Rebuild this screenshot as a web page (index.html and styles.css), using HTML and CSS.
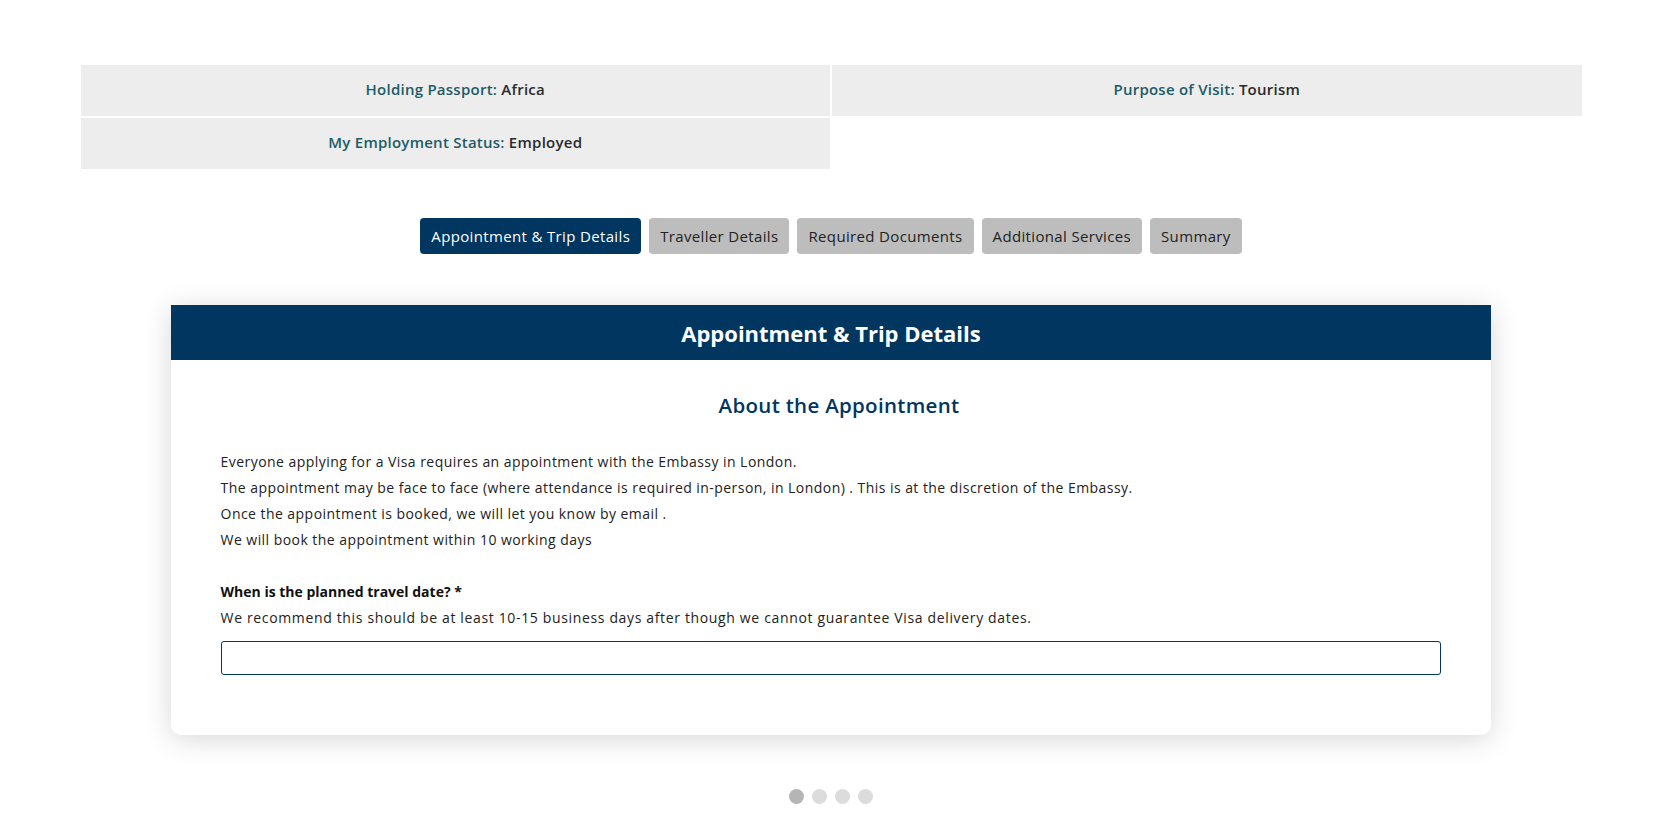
FILE: index.html
```html
<!DOCTYPE html>
<html lang="en">
<head>
<meta charset="utf-8">
<title>Appointment &amp; Trip Details</title>
<link rel="stylesheet" href="styles.css">
</head>
<body>
<div class="page">
  <div class="container">
    <div class="summary">
      <div class="cell"><span class="key">Holding Passport:</span>&nbsp;Africa</div>
      <div class="cell"><span class="key">Purpose of Visit:</span>&nbsp;Tourism</div>
      <div class="cell"><span class="key">My Employment Status:</span>&nbsp;Employed</div>
    </div>

    <nav class="steps">
      <button class="step active">Appointment &amp; Trip Details</button>
      <button class="step">Traveller Details</button>
      <button class="step">Required Documents</button>
      <button class="step">Additional Services</button>
      <button class="step">Summary</button>
    </nav>

    <section class="card">
      <header class="card-head">Appointment &amp; Trip Details</header>
      <div class="card-body">
        <h2 class="section-title">About the Appointment</h2>
        <p class="info">
          Everyone applying for a Visa requires an appointment with the Embassy in London.<br>
          The appointment may be face to face (where attendance is required in-person, in London) . This is at the discretion of the Embassy.<br>
          Once the appointment is booked, we will let you know by email .<br>
          We will book the appointment within 10 working days
        </p>
        <label class="field-label" for="travel-date">When is the planned travel date? *</label>
        <p class="help">We recommend this should be at least 10-15 business days after though we cannot guarantee Visa delivery dates.</p>
        <input class="field" id="travel-date" type="text">
      </div>
    </section>

    <div class="dots">
      <span class="dot on"></span>
      <span class="dot"></span>
      <span class="dot"></span>
      <span class="dot"></span>
    </div>
  </div>
</div>
</body>
</html>
```

FILE: styles.css
```css
* { box-sizing: border-box; }

html, body {
  margin: 0;
  padding: 0;
  background: #ffffff;
}

body {
  font-family: "Open Sans", "Liberation Sans", sans-serif;
  color: #222;
}

.page {
  width: 1662px;
  padding-top: 65px;
}

.container {
  width: 1501px;
  margin: 0 auto;
}

.summary {
  display: grid;
  grid-template-columns: 1fr 1fr;
  gap: 2px;
}

.cell {
  background: #ededed;
  height: 51px;
  display: flex;
  align-items: center;
  justify-content: center;
  padding-bottom: 4px;
  font-size: 15px;
  letter-spacing: 0.25px;
  font-weight: 600;
  color: #2b2b2b;
}

.key {
  color: #1d5b68;
}

.steps {
  display: flex;
  justify-content: center;
  gap: 8px;
  margin-top: 49px;
}

.step {
  font-family: inherit;
  font-size: 15px;
  letter-spacing: 0.35px;
  height: 36px;
  padding: 0 11px;
  border: none;
  border-radius: 4px;
  background: #bdbdbd;
  color: #222;
  cursor: pointer;
}

.step.active {
  background: #003660;
  color: #fff;
}

.card {
  width: 88%;
  margin: 51px auto 0;
  background: #fff;
  border-radius: 0 0 10px 10px;
  box-shadow: 0 4px 28px rgba(0, 0, 0, 0.16);
  overflow: hidden;
}

.card-head {
  background: #003660;
  color: #fff;
  height: 55px;
  display: flex;
  align-items: center;
  justify-content: center;
  font-size: 22px;
  font-weight: 700;
}

.card-body {
  padding: 30px 50px 60px;
}

.section-title {
  margin: 0 0 29px;
  padding-left: 16px;
  text-align: center;
  font-size: 20.5px;
  letter-spacing: 0.3px;
  line-height: 30px;
  font-weight: 600;
  color: #003660;
}

.info {
  margin: 0 0 26px;
  font-size: 14px;
  letter-spacing: 0.45px;
  line-height: 26px;
  color: #222;
}

.field-label {
  display: block;
  font-size: 14px;
  line-height: 26px;
  font-weight: 700;
  color: #111;
}

.help {
  margin: 0 0 10px;
  font-size: 14px;
  letter-spacing: 0.65px;
  line-height: 26px;
  color: #222;
}

.field {
  display: block;
  width: 100%;
  height: 34px;
  border: 1px solid #003660;
  border-radius: 3px;
  font-family: inherit;
  font-size: 14px;
  padding: 0 10px;
  outline: none;
}

.dots {
  display: flex;
  justify-content: center;
  gap: 8px;
  margin-top: 54px;
}

.dot {
  width: 15px;
  height: 15px;
  border-radius: 50%;
  background: #dcdcdc;
}

.dot.on {
  background: #b5b5b5;
}
```
